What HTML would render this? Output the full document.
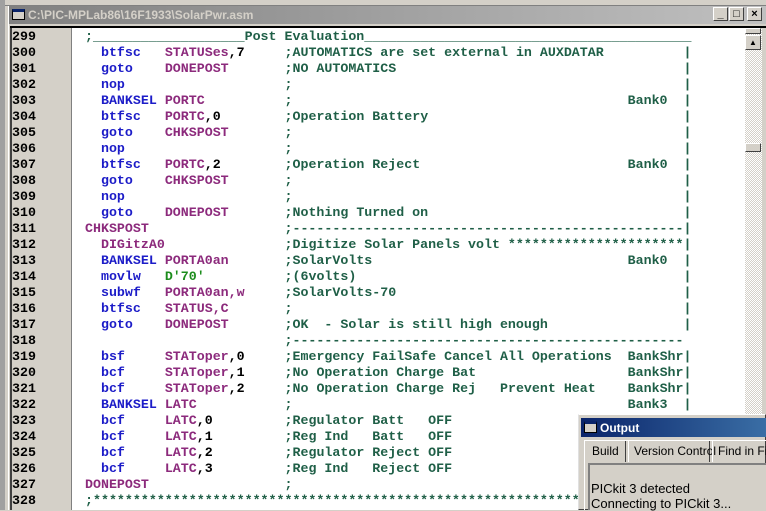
<!DOCTYPE html>
<html><head><style>
*{margin:0;padding:0;box-sizing:border-box}
body{width:766px;height:510px;overflow:hidden;background:#d4d0c8;position:relative;font-family:"Liberation Sans",sans-serif}
.abs{position:absolute}
pre{font-family:"Liberation Mono",monospace;font-weight:bold;font-size:13.3px;line-height:16px;color:#1f5f47;letter-spacing:0}
.i{color:#1c1cc8}.o{color:#8c2a7c}.k{color:#000}.l{color:#1c8c1c}
.btn{position:absolute;top:7px;width:15px;height:14px;background:#d4d0c8;border:1px solid;border-color:#fff #404040 #404040 #fff;font-size:11px;line-height:12px;text-align:center;font-weight:bold}
</style></head><body>
<div class="abs" style="left:0;top:0;width:766px;height:6px;background:#d4d0c8;border-bottom:1px solid #808080"></div>
<div class="abs" style="left:0;top:0;width:5px;height:510px;background:#a0a0a0"></div>
<div class="abs" style="left:8px;top:6px;width:758px;height:504px;background:#d4d0c8;border-left:1px solid #fff"></div>
<div class="abs" style="left:9px;top:6px;width:757px;height:18px;background:linear-gradient(90deg,#808080,#c0c0c0)"></div>
<div class="abs" style="left:12px;top:9px;width:13px;height:11px;background:#d4d0c8;border:1px solid #000;border-top:3px solid #0a246a"></div>
<div class="abs" style="left:28px;top:7px;font-size:12px;font-weight:bold;color:#d4d0c8;line-height:16px">C:\PIC-MPLab86\16F1933\SolarPwr.asm</div>
<div class="btn" style="left:713px">_</div>
<div class="btn" style="left:729px">□</div>
<div class="btn" style="left:747px">×</div>
<div class="abs" style="left:10px;top:26px;width:756px;height:2px;background:#000"></div>
<div class="abs" style="left:10px;top:28px;width:62px;height:482px;background:#d4d0c8;border-left:2px solid #404040;border-right:1px solid #808080"></div>
<div class="abs" style="left:72px;top:28px;width:673px;height:482px;background:#fff"></div>
<div class="abs" style="left:745px;top:28px;width:17px;height:482px;background:repeating-conic-gradient(#fff 0 25%,#d4d0c8 0 50%) 0 0/2px 2px"></div>
<div class="abs" style="left:745px;top:28px;width:16px;height:6px;background:#d4d0c8;border:1px solid;border-color:#fff #404040 #404040 #fff"></div>
<div class="abs" style="left:745px;top:35px;width:16px;height:15px;background:#d4d0c8;border:1px solid;border-color:#fff #404040 #404040 #fff;font-size:8px;text-align:center;line-height:13px">▲</div>
<div class="abs" style="left:745px;top:143px;width:16px;height:9px;background:#d4d0c8;border:1px solid;border-color:#fff #404040 #404040 #fff"></div>
<div class="abs" style="left:762px;top:28px;width:4px;height:482px;background:#d4d0c8"></div>
<pre class="abs k" style="left:12px;top:29px">299
300
301
302
303
304
305
306
307
308
309
310
311
312
313
314
315
316
317
318
319
320
321
322
323
324
325
326
327
328</pre>
<pre class="abs" style="left:85px;top:29px">;___________________Post Evaluation_________________________________________
  <span class="i">btfsc</span>   <span class="o">STATUSes</span><span class="k">,7</span>     ;AUTOMATICS are set external in AUXDATAR          |
  <span class="i">goto</span>    <span class="o">DONEPOST</span>       ;NO AUTOMATICS                                    |
  <span class="i">nop</span>                    ;                                                 |
  <span class="i">BANKSEL</span> <span class="o">PORTC</span>          ;                                          Bank0  |
  <span class="i">btfsc</span>   <span class="o">PORTC</span><span class="k">,0</span>        ;Operation Battery                                |
  <span class="i">goto</span>    <span class="o">CHKSPOST</span>       ;                                                 |
  <span class="i">nop</span>                    ;                                                 |
  <span class="i">btfsc</span>   <span class="o">PORTC</span><span class="k">,2</span>        ;Operation Reject                          Bank0  |
  <span class="i">goto</span>    <span class="o">CHKSPOST</span>       ;                                                 |
  <span class="i">nop</span>                    ;                                                 |
  <span class="i">goto</span>    <span class="o">DONEPOST</span>       ;Nothing Turned on                                |
<span class="o">CHKSPOST</span>                 ;-------------------------------------------------|
  <span class="o">DIGitzA0</span>               ;Digitize Solar Panels volt **********************|
  <span class="i">BANKSEL</span> <span class="o">PORTA0an</span>       ;SolarVolts                                Bank0  |
  <span class="i">movlw</span>   <span class="l">D'70'</span>          ;(6volts)                                         |
  <span class="i">subwf</span>   <span class="o">PORTA0an,w</span>     ;SolarVolts-70                                    |
  <span class="i">btfsc</span>   <span class="o">STATUS,C</span>       ;                                                 |
  <span class="i">goto</span>    <span class="o">DONEPOST</span>       ;OK  - Solar is still high enough                 |
                         ;-------------------------------------------------
  <span class="i">bsf</span>     <span class="o">STAToper</span><span class="k">,0</span>     ;Emergency FailSafe Cancel All Operations  BankShr|
  <span class="i">bcf</span>     <span class="o">STAToper</span><span class="k">,1</span>     ;No Operation Charge Bat                   BankShr|
  <span class="i">bcf</span>     <span class="o">STAToper</span><span class="k">,2</span>     ;No Operation Charge Rej   Prevent Heat    BankShr|
  <span class="i">BANKSEL</span> <span class="o">LATC</span>           ;                                          Bank3  |
  <span class="i">bcf</span>     <span class="o">LATC</span><span class="k">,0</span>         ;Regulator Batt   OFF                             |
  <span class="i">bcf</span>     <span class="o">LATC</span><span class="k">,1</span>         ;Reg Ind   Batt   OFF                             |
  <span class="i">bcf</span>     <span class="o">LATC</span><span class="k">,2</span>         ;Regulator Reject OFF                             |
  <span class="i">bcf</span>     <span class="o">LATC</span><span class="k">,3</span>         ;Reg Ind   Reject OFF                             |
<span class="o">DONEPOST</span>                 ;
;***************************************************************************</pre>
<div class="abs" style="left:578px;top:414px;width:188px;height:96px;background:#d4d0c8;border:1px solid;border-color:#fff #404040 #404040 #e0e0e0"></div>
<div class="abs" style="left:581px;top:418px;width:185px;height:19px;background:linear-gradient(90deg,#0a246a,#3a6ea5)"></div>
<div class="abs" style="left:584px;top:421px;width:13px;height:12px;background:#d4d0c8;border:1px solid #000;border-top:3px solid #0a246a"></div>
<div class="abs" style="left:600px;top:420px;font-size:12px;font-weight:bold;color:#fff;line-height:16px">Output</div>
<div class="abs" style="left:584px;top:440px;width:182px;height:70px;border-left:1px solid #fff;border-top:1px solid #fff"></div>
<div class="abs" style="left:586px;top:441px;width:40px;height:21px;border-right:1px solid #404040;font-size:12px;line-height:20px;padding-left:6px">Build</div>
<div class="abs" style="left:628px;top:441px;width:82px;height:21px;border-left:1px solid #fff;border-right:1px solid #404040;font-size:12px;line-height:20px;padding-left:5px;white-space:nowrap">Version Control</div>
<div class="abs" style="left:712px;top:441px;width:60px;height:21px;border-left:1px solid #fff;font-size:12px;line-height:20px;padding-left:5px;white-space:nowrap;overflow:hidden">Find in Files</div>
<div class="abs" style="left:588px;top:463px;width:178px;height:47px;border-left:2px solid #808080;border-top:2px solid #808080;background:#d4d0c8"></div>
<div class="abs" style="left:591px;top:481px;font-size:13px;line-height:15px;white-space:nowrap">PICkit 3 detected<br>Connecting to PICkit 3...</div>
</body></html>
